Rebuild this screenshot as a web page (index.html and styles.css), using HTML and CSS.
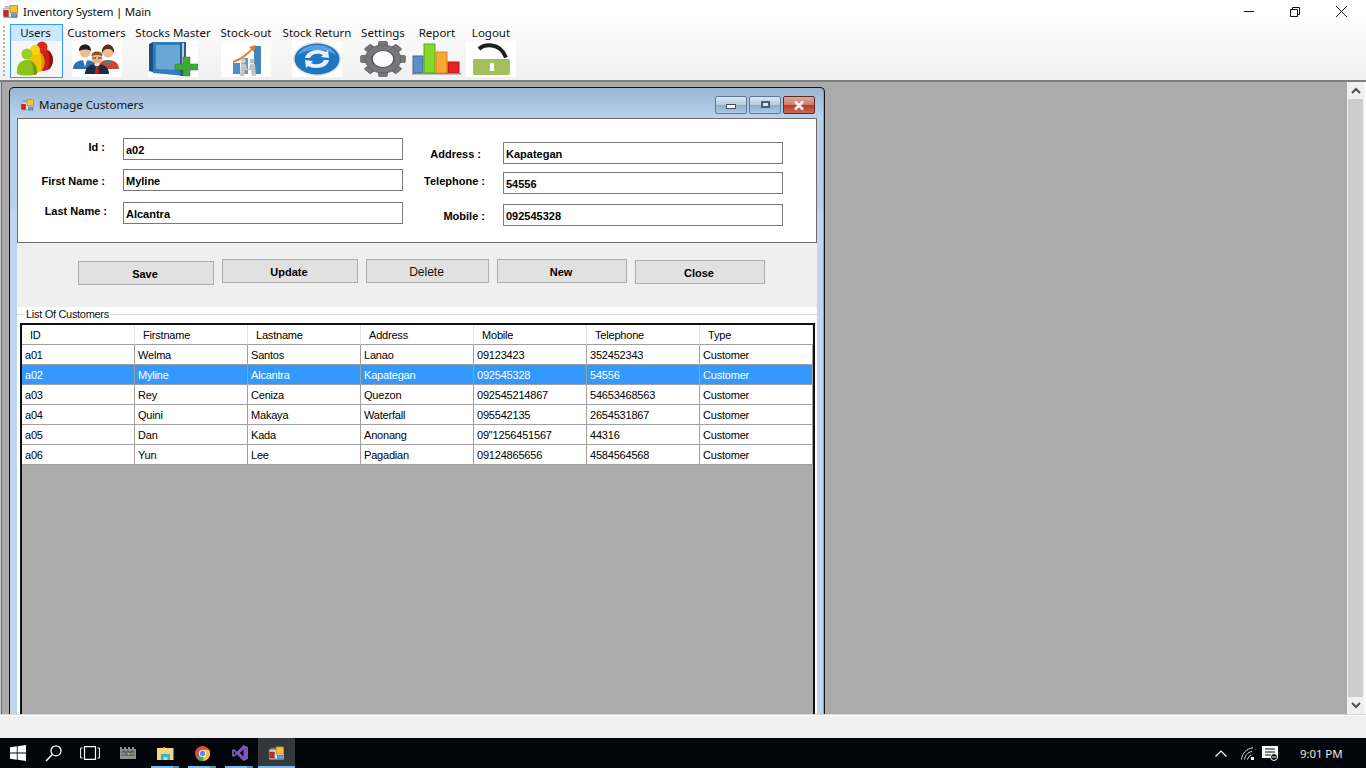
FILE: index.html
```html
<!DOCTYPE html>
<html lang="en">
<head>
    <meta charset="UTF-8">
    <meta name="viewport" content="width=device-width, initial-scale=1.0">
    <title>Inventory System | Main</title>
    <link rel="stylesheet" href="styles.css">
</head>
<body>
    <svg class="defs" width="0" height="0">
        <symbol id="app-icon" viewBox="0 0 16 14">
            <path d="M.5 3.500h15v10H.5z" fill="#e4e4e4" stroke="#a8a8a8"/>
            <path d="M2 2h5M2 12.500h5" stroke="#8a8a8a"/>
            <rect x="7.500" y="0.500" width="8" height="7.500" fill="#f3c532" stroke="#a87f12" stroke-width="0.7"/>
            <rect x="1" y="6" width="4.500" height="6" fill="#d8261c" stroke="#7d1610" stroke-width="0.7"/>
            <rect x="9" y="9.500" width="5.500" height="3.500" fill="#6f9fe0" stroke="#3b67a8" stroke-width="0.7"/>
        </symbol>
    </svg>

    <div class="app">
        <!-- Main window caption -->
        <header class="titlebar">
            <svg class="app-icon"><use href="#app-icon"/></svg>
            <span class="titlebar-text">Inventory System | Main</span>
            <div class="caption-btns">
                <svg class="cap-btn" viewBox="0 0 46 22"><path d="M17 10.500h10" stroke="#111" fill="none"/></svg>
                <svg class="cap-btn" viewBox="0 0 46 22"><path d="M19.500 8.500h-2v7h7v-2M19.500 8.500v-2h7v7h-2M17.500 8.500h7v7" stroke="#111" fill="none"/></svg>
                <svg class="cap-btn" viewBox="0 0 46 22"><path d="M17 5l11 11M28 5L17 16" stroke="#111" fill="none"/></svg>
            </div>
        </header>

        <!-- Toolbar -->
        <nav class="toolbar">
            <div class="grip"></div>
            <div class="tool tool-users is-active">
                <span class="tool-label">Users</span>
                <svg class="tool-img" viewBox="0 0 50 36">
                    <rect width="50" height="36" fill="#f6f6f6"/>
                    <ellipse cx="33" cy="19" rx="9" ry="11" fill="#c9201c"/>
                    <path d="M36 9c4 2 6 6 6 10s-2 8-5 10c2-6 2-14-1-20z" fill="#8f1512"/>
                    <circle cx="31" cy="6" r="5.500" fill="#d92a22"/>
                    <ellipse cx="25.500" cy="21" rx="8" ry="11" fill="#f2c400"/>
                    <path d="M29 12c3 2 4.500 5 4.500 9s-1.500 8-4 10c1.500-6 1.500-13-.500-19z" fill="#d89a00"/>
                    <circle cx="24" cy="9" r="5" fill="#f7d21a"/>
                    <path d="M6 33c-1-9 3-14 10-14s11 6 10 14c-6 2-14 2-20 0z" fill="#8cc21c"/>
                    <path d="M20 20c4 2 6 7 6 13l-3 1c0-5-1-10-3-14z" fill="#6a9a10"/>
                    <circle cx="16" cy="13" r="5.500" fill="#9ccf26"/>
                </svg>
            </div>
            <div class="tool tool-customers">
                <span class="tool-label">Customers</span>
                <svg class="tool-img" viewBox="0 0 50 36">
                    <rect width="50" height="36" fill="#fff"/>
                    <path d="M1 28c0-6 5-9 12-9s12 3 12 9z" fill="#2f6fb5"/>
                    <path d="M11 19l2 7 2-7z" fill="#fff"/>
                    <circle cx="13" cy="11" r="5.500" fill="#edba8e"/>
                    <path d="M7 10c0-5 3-6.500 6-6.500s6 1.500 6 6.500c-3-2-8-2-12 0z" fill="#1d1d24"/>
                    <path d="M26 28c0-6 4-9 10-9s11 3 11 9z" fill="#c84a36"/>
                    <path d="M33 19l3 5 3-5z" fill="#2b8f8a"/>
                    <circle cx="36" cy="11" r="5.500" fill="#efbd92"/>
                    <path d="M30 13c-1-7 3-9.500 6-9.500s7 2.500 6 9.500c-1-4-3-5-6-5s-5 1-6 5z" fill="#5b3116"/>
                    <path d="M13 33c0-7 5-10 12-10s12 3 12 10z" fill="#1c2a44"/>
                    <path d="M22 23l3 4 3-4z" fill="#fff"/>
                    <path d="M24 25h2l1 7-2 1-2-1z" fill="#c3261d"/>
                    <circle cx="25" cy="17" r="5.500" fill="#e9b588"/>
                    <path d="M19.500 15c0-3 2-4.500 5.500-4.500s5.500 1.500 5.500 4.500c-3-1.500-8-1.500-11 0z" fill="#8a5122"/>
                    <path d="M20.500 17h3.500M26 17h3.500" stroke="#4a2b14" stroke-width="1.200"/>
                </svg>
            </div>
            <div class="tool tool-stocks">
                <span class="tool-label">Stocks Master</span>
                <svg class="tool-img" viewBox="0 0 50 36">
                    <rect width="50" height="36" fill="#fff"/>
                    <path d="M1 3l4-2v30l-4-1z" fill="#174f86"/>
                    <path d="M5 1h33v34l-33-3z" fill="#2f7dbd"/>
                    <path d="M8 4h24v25l-24-1z" fill="#6ba7d6"/>
                    <path d="M32 1h6v34h-6z" fill="#245f93"/>
                    <path d="M34 2h2v26h-2z" fill="#c6ccd2"/>
                    <path d="M27 23h8v-7h7v7h8v6h-8v6h-7v-6h-8z" fill="#3faa3a" stroke="#287a27" stroke-width="0.500"/>
                </svg>
            </div>
            <div class="tool tool-stockout">
                <span class="tool-label">Stock-out</span>
                <svg class="tool-img" viewBox="0 0 50 36">
                    <rect width="50" height="36" fill="#fff"/>
                    <rect x="12" y="22" width="7" height="11" fill="#4d8fc7"/>
                    <rect x="20" y="17" width="7" height="16" fill="#5b9bd0"/>
                    <rect x="33" y="5" width="7" height="28" fill="#3f84bf"/>
                    <path d="M12 20c6-2 13-7 18-12l-2-2 7-2-2 7-2-2c-5 6-12 11-19 13z" fill="#e8762a"/>
                    <circle cx="22" cy="20" r="2.500" fill="#d4d4d4"/>
                    <circle cx="31" cy="20" r="2.500" fill="#bdbdbd"/>
                    <path d="M19 35l1-12h5l1 5h2l1-5h5l1 12h-4l-1-6h-6l-1 6z" fill="#c4c4c4"/>
                </svg>
            </div>
            <div class="tool tool-return">
                <span class="tool-label">Stock Return</span>
                <svg class="tool-img" viewBox="0 0 50 36">
                    <rect width="50" height="36" fill="#fff"/>
                    <ellipse cx="25" cy="18" rx="24" ry="17" fill="#dfe4ea"/>
                    <ellipse cx="25" cy="18" rx="22.500" ry="15.500" fill="#1f76c2"/>
                    <path d="M6 14c3-7 11-10 19-10s16 3 19 10c-6-4-12-5-19-5s-13 1-19 5z" fill="#5aa2dc"/>
                    <path d="M13 17c1-5 6-8 13-8 3 0 6 1 8 2l2-2 1 8-8-1 2-2c-4-2-11-2-13 3z" fill="#e8f2fa"/>
                    <path d="M37 19c-1 5-6 8-13 8-3 0-6-1-8-2l-2 2-1-8 8 1-2 2c4 2 11 2 13-3z" fill="#e8f2fa"/>
                </svg>
            </div>
            <div class="tool tool-settings">
                <span class="tool-label">Settings</span>
                <svg class="tool-img" viewBox="0 0 50 36">
                    <g transform="translate(25 18) scale(1.280 1)" fill="#77777c" stroke="#57575c" stroke-width="0.600">
                        <rect x="-3.500" y="-17.500" width="7" height="35" rx="1"/>
                        <rect x="-3.500" y="-17.500" width="7" height="35" rx="1" transform="rotate(45)"/>
                        <rect x="-3.500" y="-17.500" width="7" height="35" rx="1" transform="rotate(90)"/>
                        <rect x="-3.500" y="-17.500" width="7" height="35" rx="1" transform="rotate(135)"/>
                        <circle r="14"/>
                        <circle r="8.500" fill="#fff" stroke="#4c4c50" stroke-width="1"/>
                    </g>
                </svg>
            </div>
            <div class="tool tool-report">
                <span class="tool-label">Report</span>
                <svg class="tool-img" viewBox="0 0 50 36">
                    <rect x="1" y="15" width="10" height="17" fill="#5d8fc6" stroke="#3c689b"/>
                    <rect x="12" y="3" width="11" height="29" fill="#86d92c" stroke="#5da31a"/>
                    <rect x="24" y="11" width="11" height="21" fill="#f9a632" stroke="#d88618"/>
                    <rect x="36" y="21" width="11" height="11" fill="#ea2127" stroke="#b5171b"/>
                    <rect x="0" y="32" width="49" height="1.500" fill="#8a8a8a"/>
                </svg>
            </div>
            <div class="tool tool-logout">
                <span class="tool-label">Logout</span>
                <svg class="tool-img" viewBox="0 0 50 36">
                    <rect width="50" height="36" fill="#fff"/>
                    <path d="M13 8c3-3 8-4 13-3.500 6 .5 11 5 14 12" fill="none" stroke="#1f1f1f" stroke-width="4"/>
                    <rect x="7" y="18" width="37" height="16" rx="2" fill="#a3bf5c"/>
                    <circle cx="26" cy="24" r="2.300" fill="#fff"/>
                    <path d="M24.500 25h3l1 5h-5z" fill="#fff"/>
                </svg>
            </div>
        </nav>

        <!-- MDI workspace with the child form floating on it -->
        <main class="workspace">
            <section class="child-window">
                <div class="child-title">
                    <svg class="child-icon"><use href="#app-icon"/></svg>
                    <span class="child-title-text">Manage Customers</span>
                    <div class="child-btns">
                        <div class="child-btn"><span class="glyph-min"></span></div>
                        <div class="child-btn"><span class="glyph-max"></span></div>
                        <div class="child-btn child-btn-close">
                            <svg width="14" height="11" viewBox="0 0 14 11"><path d="M3 1.500l8 8M11 1.500l-8 8" stroke="#f4f0ee" stroke-width="2.600"/></svg>
                        </div>
                    </div>
                </div>

                <div class="client">
                    <div class="form-panel">
                        <div class="form-col form-col-left">
                            <div class="form-row row-id">
                                <label class="form-label label-top pad-2">Id :</label>
                                <input class="form-input" value="a02" readonly>
                            </div>
                            <div class="form-row row-first">
                                <label class="form-label label-low pad-2">First Name :</label>
                                <input class="form-input" value="Myline" readonly>
                            </div>
                            <div class="form-row row-last">
                                <label class="form-label label-mid">Last Name :</label>
                                <input class="form-input" value="Alcantra" readonly>
                            </div>
                        </div>
                        <div class="form-col form-col-right">
                            <div class="form-row row-address">
                                <label class="form-label label-low pad-4">Address :</label>
                                <input class="form-input" value="Kapategan" readonly>
                            </div>
                            <div class="form-row row-phone">
                                <label class="form-label label-mid">Telephone :</label>
                                <input class="form-input" value="54556" readonly>
                            </div>
                            <div class="form-row row-mobile">
                                <label class="form-label label-low">Mobile :</label>
                                <input class="form-input" value="092545328" readonly>
                            </div>
                        </div>
                    </div>

                    <div class="btn-panel">
                        <button class="btn btn-save">Save</button>
                        <button class="btn btn-update">Update</button>
                        <button class="btn btn-delete">Delete</button>
                        <button class="btn btn-new">New</button>
                        <button class="btn btn-close">Close</button>
                    </div>

                    <fieldset class="group">
                        <legend class="group-title">List Of Customers</legend>
                        <div class="grid">
                            <table class="grid-table">
                                <thead>
                                    <tr><th>ID</th><th>Firstname</th><th>Lastname</th><th>Address</th><th>Mobile</th><th>Telephone</th><th>Type</th></tr>
                                </thead>
                                <tbody>
                                    <tr><td>a01</td><td>Welma</td><td>Santos</td><td>Lanao</td><td>09123423</td><td>352452343</td><td>Customer</td></tr>
                                    <tr class="is-selected"><td>a02</td><td>Myline</td><td>Alcantra</td><td>Kapategan</td><td>092545328</td><td>54556</td><td>Customer</td></tr>
                                    <tr><td>a03</td><td>Rey</td><td>Ceniza</td><td>Quezon</td><td>092545214867</td><td>54653468563</td><td>Customer</td></tr>
                                    <tr><td>a04</td><td>Quini</td><td>Makaya</td><td>Waterfall</td><td>095542135</td><td>2654531867</td><td>Customer</td></tr>
                                    <tr><td>a05</td><td>Dan</td><td>Kada</td><td>Anonang</td><td>09"1256451567</td><td>44316</td><td>Customer</td></tr>
                                    <tr><td>a06</td><td>Yun</td><td>Lee</td><td>Pagadian</td><td>09124865656</td><td>4584564568</td><td>Customer</td></tr>
                                </tbody>
                            </table>
                        </div>
                    </fieldset>
                </div>
            </section>

            <div class="scrollbar">
                <div class="scroll-arrow">
                    <svg width="10" height="7" viewBox="0 0 10 7"><path d="M1 6l4-4 4 4" fill="none" stroke="#505050" stroke-width="2"/></svg>
                </div>
                <div class="scroll-thumb"></div>
                <div class="scroll-arrow">
                    <svg width="10" height="7" viewBox="0 0 10 7"><path d="M1 1l4 4 4-4" fill="none" stroke="#505050" stroke-width="2"/></svg>
                </div>
            </div>
        </main>

        <div class="statusbar"></div>

        <!-- Windows taskbar -->
        <footer class="taskbar">
            <div class="task-btn">
                <svg width="16" height="16" viewBox="0 0 16 16"><path d="M0 2.300l6.800-1v6.300H0zM7.600 1.200L16 0v7.600H7.600zM0 8.400h6.800v6.300l-6.800-1zM7.600 8.400H16V16l-8.400-1.200z" fill="#fff"/></svg>
            </div>
            <div class="task-btn">
                <svg width="18" height="18" viewBox="0 0 18 18"><circle cx="11" cy="6.800" r="5" fill="none" stroke="#fff" stroke-width="1.300"/><path d="M7.300 10.500L1 17" stroke="#fff" stroke-width="1.500"/></svg>
            </div>
            <div class="task-btn">
                <svg width="20" height="14" viewBox="0 0 20 14"><path d="M4.500.6h11v12.800h-11z" fill="none" stroke="#fff" stroke-width="1.200"/><path d="M2.500 2H.6v10h1.900M17.500 2h1.900v10h-1.900" fill="none" stroke="#fff"/></svg>
            </div>
            <div class="task-btn task-btn-wide">
                <svg width="16" height="12" viewBox="0 0 16 12"><path d="M0 0h2v2h2V0h2v2h2V0h2v2h2V0h2v2h2v10H0z" fill="#8e9291"/><path d="M1 5h14M1 8h14M4 3v2M8 3v2M12 3v2M6 5v3M10 5v3" stroke="#4a4d4c"/><rect x="8" y="6" width="2" height="1.500" fill="#b9bf78"/></svg>
            </div>
            <div class="task-btn is-open">
                <svg width="17" height="14" viewBox="0 0 17 14"><path d="M0 1h6l1.500 1.500H8V1h-7z" fill="#e8b93c"/><path d="M0 2h16.500v12H0z" fill="#f5d77b"/><path d="M4 8h9v6h-2.500v-3h-4v3H4z" fill="#2ab3e8"/></svg>
            </div>
            <div class="task-btn is-open">
                <svg width="15" height="15" viewBox="0 0 16 16">
                    <circle cx="8" cy="8" r="8" fill="#dd4b3e"/>
                    <path d="M8 8L1 12a8 8 0 0 0 8 4z" fill="#3da853"/>
                    <path d="M8 4h7a8 8 0 0 1-6 12z" fill="#f6c42f"/>
                    <circle cx="8" cy="8" r="3.800" fill="#fff"/>
                    <circle cx="8" cy="8" r="2.900" fill="#4b8df5"/>
                </svg>
            </div>
            <div class="task-btn is-open">
                <svg width="16" height="16" viewBox="0 0 16 16"><path d="M11.500 0L16 2v12l-4.500 2L5 9.500 1.800 12 0 11V5l1.800-1L5 6.500zM11.500 4.500L7.800 8l3.700 3.500zM1.800 6v4L3.600 8z" fill="#7b55b8" fill-rule="evenodd"/></svg>
            </div>
            <div class="task-btn is-open is-current">
                <svg class="task-app-icon"><use href="#app-icon"/></svg>
            </div>

            <div class="tray">
                <svg class="tray-caret" width="12" height="7" viewBox="0 0 12 7"><path d="M.5 6.500L6 1l5.500 5.500" fill="none" stroke="#fff" stroke-width="1.200"/></svg>
                <svg class="tray-wifi" width="13" height="13" viewBox="0 0 13 13"><path d="M.5 12.500C1 7 5 1.500 12 .8M3.500 12.500C4 9 6.500 5 11 4.500M6.500 12.500C7 10.500 8.500 8.500 10.500 8" fill="none" stroke="#dcdcdc"/><rect x="10" y="10" width="3" height="3" fill="#fff"/></svg>
                <svg class="tray-note" width="17" height="15" viewBox="0 0 17 15"><path d="M0 0h16v12H0z" fill="#fff"/><path d="M3 3h10M3 6h10M3 9h6" stroke="#0a0a0a"/><circle cx="12" cy="11" r="3.500" fill="#0a0a0a" stroke="#fff"/><path d="M10 11h4" stroke="#fff"/></svg>
                <span class="tray-time">9:01 PM</span>
            </div>
        </footer>
    </div>
</body>
</html>
```

FILE: styles.css
```css
* {
    box-sizing: border-box;
}

html, body {
    margin: 0;
    height: 100%;
    overflow: hidden;
}

body {
    font-family: 'Liberation Sans', Arial, sans-serif;
    font-size: 11px;
    color: #000;
}

.defs {
    position: absolute;
}

.app {
    display: flex;
    flex-direction: column;
    width: 1366px;
    height: 768px;
    background: #f0f0f0;
}

/* main caption */
.titlebar {
    display: flex;
    align-items: center;
    height: 23px;
    padding-left: 3px;
    background: #fff;
}

.app-icon {
    width: 15px;
    height: 13px;
}

.titlebar-text {
    margin-left: 5px;
    font-family: 'Noto Sans', sans-serif;
    font-size: 11.5px;
    letter-spacing: -0.25px;
    color: #111;
}

.caption-btns {
    display: flex;
    margin-left: auto;
    margin-right: 1px;
}

.cap-btn {
    width: 46px;
    height: 22px;
}

/* toolbar */
.toolbar {
    display: flex;
    height: 59px;
    padding: 1px 0 3px 3px;
    background: linear-gradient(to bottom, #fcfcfc, #f0f0f0);
    border-bottom: 2px solid #7e7e7e;
}

.grip {
    width: 3px;
    height: 50px;
    margin: 2px 4px 0 0;
    border-left: 2px dotted #b4b4b4;
}

.tool {
    display: flex;
    flex-direction: column;
    align-items: center;
    height: 54px;
    border: 1px solid transparent;
}

.tool.is-active {
    background: linear-gradient(to bottom, #cce8ff 0, #cce8ff 16px, #f6f6f6 16px);
    border-color: #3399ff;
}

.tool-label {
    height: 16px;
    font-family: 'Noto Sans', sans-serif;
    font-size: 11.5px;
    line-height: 16px;
    white-space: nowrap;
    color: #111;
}

.tool-img {
    flex: none;
    width: 50px;
    height: 36px;
}

.tool-users { width: 53px; padding-right: 2px; }
.tool-customers { width: 67px; }
.tool-stocks { width: 86px; }
.tool-stockout { width: 60px; }
.tool-return { width: 82px; }
.tool-settings { width: 50px; }
.tool-report { width: 58px; }
.tool-logout { width: 50px; }

/* mdi area */
.workspace {
    position: relative;
    flex: 1;
    overflow: hidden;
    background: #ababab;
    border-left: 1px solid #c8c8c8;
    border-right: 2px solid #f8f8f8;
    box-shadow: inset 1px 0 #707070;
    display: flex;
    justify-content: flex-end;
}

.child-window {
    position: absolute;
    left: 8px;
    top: 5px;
    width: 816px;
    height: 700px;
    padding: 0 7px;
    border: 1px solid #141414;
    border-bottom: none;
    border-radius: 5px 5px 0 0;
    background: linear-gradient(to bottom, #9ab5d4 0, #b9d3ec 30px, #b5cfe9 118px, #bed6ee 122px);
    box-shadow: inset -1px 0 #3fbfe6;
}

.child-title {
    display: flex;
    height: 30px;
    padding: 8px 2px 0 4px;
}

.child-icon {
    width: 13px;
    height: 12px;
    margin-top: 3px;
}

.child-title-text {
    margin: 1px 0 0 5px;
    font-family: 'Noto Sans', sans-serif;
    font-size: 11.5px;
    line-height: 16px;
    letter-spacing: -0.05px;
    color: #111;
}

.child-btns {
    display: flex;
    gap: 2px;
    margin-left: auto;
}

.child-btn {
    display: flex;
    align-items: center;
    justify-content: center;
    width: 32px;
    height: 18px;
    border: 1px solid #5b7a9c;
    border-radius: 2px;
    background: linear-gradient(to bottom, #dbe6f2 0, #b6cbe1 50%, #8dabc9 50%, #b1c8df 100%);
}

.child-btn-close {
    border-color: #5e2a2a;
    background: linear-gradient(to bottom, #e0a79a 0, #cf7b68 50%, #b63c22 50%, #cc6a50 100%);
}

.glyph-min {
    width: 10px;
    height: 5px;
    margin-top: 3px;
    background: #f4f6f8;
    border: 1px solid #3d5068;
}

.glyph-max {
    width: 9px;
    height: 7px;
    margin-bottom: 1px;
    border: 2px solid #4a5d75;
    background: #d5e1ed;
}

.client {
    display: flex;
    flex-direction: column;
    width: 800px;
    height: 670px;
    background: #fff;
}

/* customer form */
.form-panel {
    display: flex;
    height: 125px;
    background: #fff;
    border: 1px solid #6b6b6b;
}

.form-col-left {
    width: 385px;
}

.form-row {
    display: flex;
    height: 22px;
}

.row-id { margin-top: 19px; }
.row-first { margin-top: 9px; }
.row-last { margin-top: 11px; }
.row-address { margin-top: 23px; }
.row-phone { margin-top: 8px; }
.row-mobile { margin-top: 10px; }

.form-label {
    flex: none;
    height: 14px;
    margin-right: 16px;
    font-weight: bold;
    line-height: 14px;
    text-align: right;
    white-space: nowrap;
}

.form-col-left .form-label {
    width: 89px;
}

.form-col-right .form-label {
    width: 82px;
    margin-right: 18px;
}

.label-top { margin-top: 2px; }
.label-mid { margin-top: 2px; }
.label-low { margin-top: 5px; }
.pad-2 { padding-right: 2px; }
.pad-4 { padding-right: 4px; }

.form-input {
    width: 280px;
    height: 22px;
    padding: 1px 2px 0;
    border: 1px solid #7a7a7a;
    background: #fff;
    font-family: 'Liberation Sans', Arial, sans-serif;
    font-size: 11px;
    font-weight: bold;
    color: #000;
    outline: none;
}

/* action buttons */
.btn-panel {
    display: flex;
    align-items: flex-start;
    gap: 8px;
    height: 64px;
    padding: 16px 0 0 61px;
    background: #efefef;
}

.btn {
    width: 130px;
    height: 24px;
    padding: 1px 2px 0 0;
    border: 1px solid #adadad;
    background: #e1e1e1;
    font-family: 'Liberation Sans', Arial, sans-serif;
    font-size: 11px;
    font-weight: bold;
    color: #000;
}

.btn-save { width: 136px; margin-top: 2px; }
.btn-update { width: 136px; }
.btn-delete { width: 123px; font-size: 12px; font-weight: normal; color: #111; }
.btn-close { margin-top: 1px; }

/* customer list */
.group {
    min-width: 0;
    margin: 0;
    padding: 2px 2px 0 3px;
    border: 0;
    border-top: 1px solid #dcdcdc;
    background: #fff;
}

.group-title {
    margin-left: 5px;
    padding: 0 1px;
    height: 14px;
    line-height: 14px;
    letter-spacing: -0.3px;
    color: #111;
}

.grid {
    height: 420px;
    border: 2px solid #111;
    background: #ababab;
}

.grid-table {
    width: 791px;
    table-layout: fixed;
    border-collapse: separate;
    border-spacing: 0;
    background: #fff;
}

.grid-table th,
.grid-table td {
    height: 20px;
    padding: 0 0 0 3px;
    font-size: 11px;
    font-weight: normal;
    letter-spacing: -0.2px;
    text-align: left;
    white-space: nowrap;
    overflow: hidden;
    border-right: 1px solid #a0a0a0;
    border-bottom: 1px solid #a0a0a0;
}

.grid-table th {
    padding-left: 8px;
    border-right-color: #e5e5e5;
}

.grid-table .is-selected td {
    background: #3399ff;
    color: #fff;
}

/* scrollbar */
.scrollbar {
    position: relative;
    display: flex;
    flex-direction: column;
    width: 17px;
    background: #f0f0f0;
}

.scroll-arrow {
    display: flex;
    align-items: center;
    justify-content: center;
    height: 17px;
    flex: none;
}

.scroll-thumb {
    flex: 1;
    margin: 0 1px;
    background: #cdcdcd;
}

/* bottom strips */
.statusbar {
    height: 24px;
    flex: none;
    border-top: 1px solid #d6d6d6;
    box-shadow: inset 0 1px #fff;
    background: #f0f0f0;
}

.taskbar {
    display: flex;
    height: 30px;
    flex: none;
    background: #02050a;
}

.task-btn {
    position: relative;
    display: flex;
    align-items: center;
    justify-content: center;
    width: 36px;
    height: 30px;
}

.task-btn-wide {
    width: 39px;
}

.task-btn.is-open {
    width: 37px;
}

.task-btn.is-open::after {
    content: '';
    position: absolute;
    left: 4px;
    right: 5px;
    bottom: 0;
    height: 2px;
    background: linear-gradient(to right, #76b9ed 80%, #5a90bb 80%);
}

.task-btn.is-current {
    background: #33383c;
}

.task-btn.is-current::after {
    left: 0;
    right: 0;
    background: #76b9ed;
}

.task-app-icon {
    width: 15px;
    height: 14px;
}

.tray {
    display: flex;
    align-items: center;
    margin-left: auto;
    padding-right: 24px;
    color: #fff;
}

.tray-wifi {
    margin-left: 14px;
}

.tray-note {
    margin-left: 8px;
}

.tray-time {
    width: 42px;
    margin-left: 21px;
    font-family: 'Noto Sans', sans-serif;
    font-size: 11.5px;
    letter-spacing: -0.1px;
    color: #e6e6e6;
    white-space: nowrap;
}
```
